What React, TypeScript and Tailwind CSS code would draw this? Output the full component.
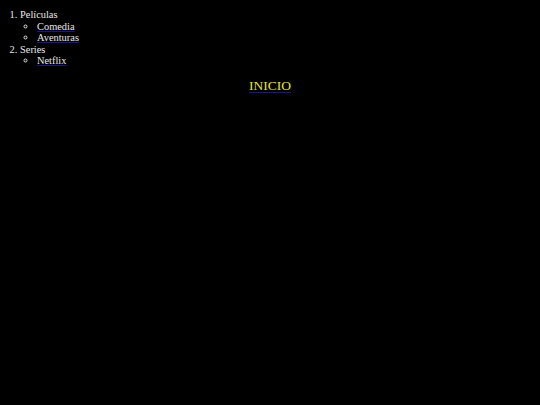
const App = () => {
    return (
        <div className="min-h-screen bg-black text-[#e8e8e8] pt-[9px] text-[10.4px] leading-[11.5px]" style={{fontFamily: '"Liberation Serif", serif'}}>
            <ol className="list-decimal pl-[20px]">
                <li>
                    Películas
                    <ul className="list-[circle] pl-[17px]">
                        <li><a href="#" className="underline decoration-1 decoration-[#18188c]">Comedia</a></li>
                        <li><a href="#" className="underline decoration-1 decoration-[#18188c]">Aventuras</a></li>
                    </ul>
                </li>
                <li>
                    Series
                    <ul className="list-[circle] pl-[17px]">
                        <li><a href="#" className="underline decoration-1 decoration-[#18188c]">Netflix</a></li>
                    </ul>
                </li>
            </ol>
            <div className="mt-[11px] text-center text-[13.5px] leading-[15px]">
                <a href="#" className="text-[#e6e62e] underline decoration-1 underline-offset-2 decoration-[#18188c]">INICIO</a>
            </div>
        </div>
    )
}
export default App
